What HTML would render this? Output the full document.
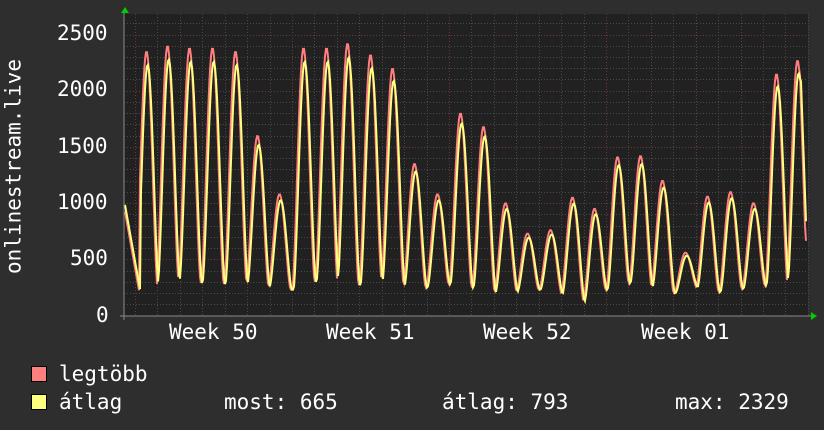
<!DOCTYPE html>
<html><head><meta charset="utf-8"><style>
body{margin:0;width:824px;height:430px;background:#2e2e2e;overflow:hidden;font-family:"DejaVu Sans Mono","Liberation Mono",monospace;color:#fff}
svg{position:absolute;left:0;top:0}
.t{position:absolute;font-size:21px;line-height:21px;white-space:pre}
.sq{position:absolute;width:14px;height:14px;border:1px solid #000}
</style></head><body>
<svg width="824" height="430" id="s">
<rect x="124" y="14" width="684" height="302" fill="#212121"/>
<g id="grid"></g>
<g id="data"></g>
<line x1="120" y1="316" x2="812" y2="316" stroke="#8a8a8a" stroke-width="1"/>
<line x1="124" y1="12" x2="124" y2="320" stroke="#8a8a8a" stroke-width="1"/>
<polygon points="121,13 125,7 129,13" fill="#00cc00"/>
<polygon points="811,312 817,316 811,320" fill="#00cc00"/>
</svg>
<div class="t" style="left:57px;top:23px">2500</div>
<div class="t" style="left:57px;top:79px">2000</div>
<div class="t" style="left:57px;top:136px">1500</div>
<div class="t" style="left:57px;top:192px">1000</div>
<div class="t" style="left:70px;top:248px">500</div>
<div class="t" style="left:96px;top:305px">0</div>
<div class="t" style="left:-96px;top:156px;width:220px;transform:rotate(-90deg);text-align:center">onlinestream.live</div>
<div class="t" style="left:169px;top:322px">Week 50</div>
<div class="t" style="left:326px;top:322px">Week 51</div>
<div class="t" style="left:483px;top:322px">Week 52</div>
<div class="t" style="left:641px;top:322px">Week 01</div>
<div class="sq" style="left:31px;top:366px;background:#ff7f7f"></div>
<div class="sq" style="left:31px;top:394px;background:#ffff7f"></div>
<div class="t" style="left:59px;top:364px">legtöbb</div>
<div class="t" style="left:59px;top:392px">átlag</div>
<div class="t" style="left:224px;top:392px">most: 665</div>
<div class="t" style="left:442px;top:392px">átlag: 793</div>
<div class="t" style="left:675px;top:392px">max: 2329</div>
<script>
var ns="http://www.w3.org/2000/svg",g=document.getElementById('grid'),d=document.getElementById('data');
function ln(x1,y1,x2,y2,c){var l=document.createElementNS(ns,'line');l.setAttribute('x1',x1);l.setAttribute('y1',y1);l.setAttribute('x2',x2);l.setAttribute('y2',y2);l.setAttribute('stroke',c);l.setAttribute('stroke-dasharray','1,2');g.appendChild(l);}
var Y=function(v){return 315.5-v*0.1124;};
for(var v=100;v<=2600;v+=100){var y=Math.round(Y(v))+.5;ln(124,y,808,y,v%500==0?'#6a3a3a':'#4a4a4a');}
for(var i=-1;i<32;i++){var x=135+i*22.43;if(x<125||x>808)continue;x=Math.round(x)+.5;var maj=((i%7)+7)%7==0;ln(x,14,x,316,maj?'#6a3a3a':'#4a4a4a');}
var pk=[[147,2350],[168,2400],[190,2380],[213,2380],[236,2350],[258,1600],[280,1080],[304,2380],[327,2380],[348,2420],[371,2320],[393,2200],[415,1350],[438,1080],[461,1800],[484,1680],[506,1000],[528,730],[551,760],[573,1050],[595,950],[618,1410],[641,1420],[663,1200],[686,560],[708,1060],[731,1100],[754,1000],[777,2150],[798,2270]];
var tr=[250,230,300,290,280,280,250,230,300,280,270,300,260,250,280,250,200,210,230,190,120,230,290,250,200,250,210,240,270,270,270];
function val(x,k){
 var bi=0,bd=1e9;for(var i=0;i<pk.length;i++){var dd=Math.abs(x-pk[i][0]);if(dd<bd){bd=dd;bi=i;}}
 var dx=x-pk[bi][0];var w=11.2;
 var t=dx<0?tr[bi]:tr[bi+1];
 if(x<140&&dx<0){return 1000-(x-124)*50;}
 var f=Math.abs(dx)>=w?0:Math.pow(0.5+0.5*Math.cos(Math.PI*dx/w),0.8);
 var p=pk[bi][1]*k;
 if(bi==pk.length-1&&dx>2){return p-(p-665)*Math.min(1,(dx-2)/6);}
 return t+(p-t)*f;}
function path(k,c,off){var s='';for(var x=125;x<=806;x+=1){var v=val(x-off,k);s+=(s?'L':'M')+x+','+Y(v).toFixed(1);}var p=document.createElementNS(ns,'path');p.setAttribute('d',s);p.setAttribute('fill','none');p.setAttribute('stroke',c);p.setAttribute('stroke-width','2');d.appendChild(p);}
path(1,'#ff7f7f',-0.5);path(0.95,'#ffff7f',0.7);
</script>
</body></html>
